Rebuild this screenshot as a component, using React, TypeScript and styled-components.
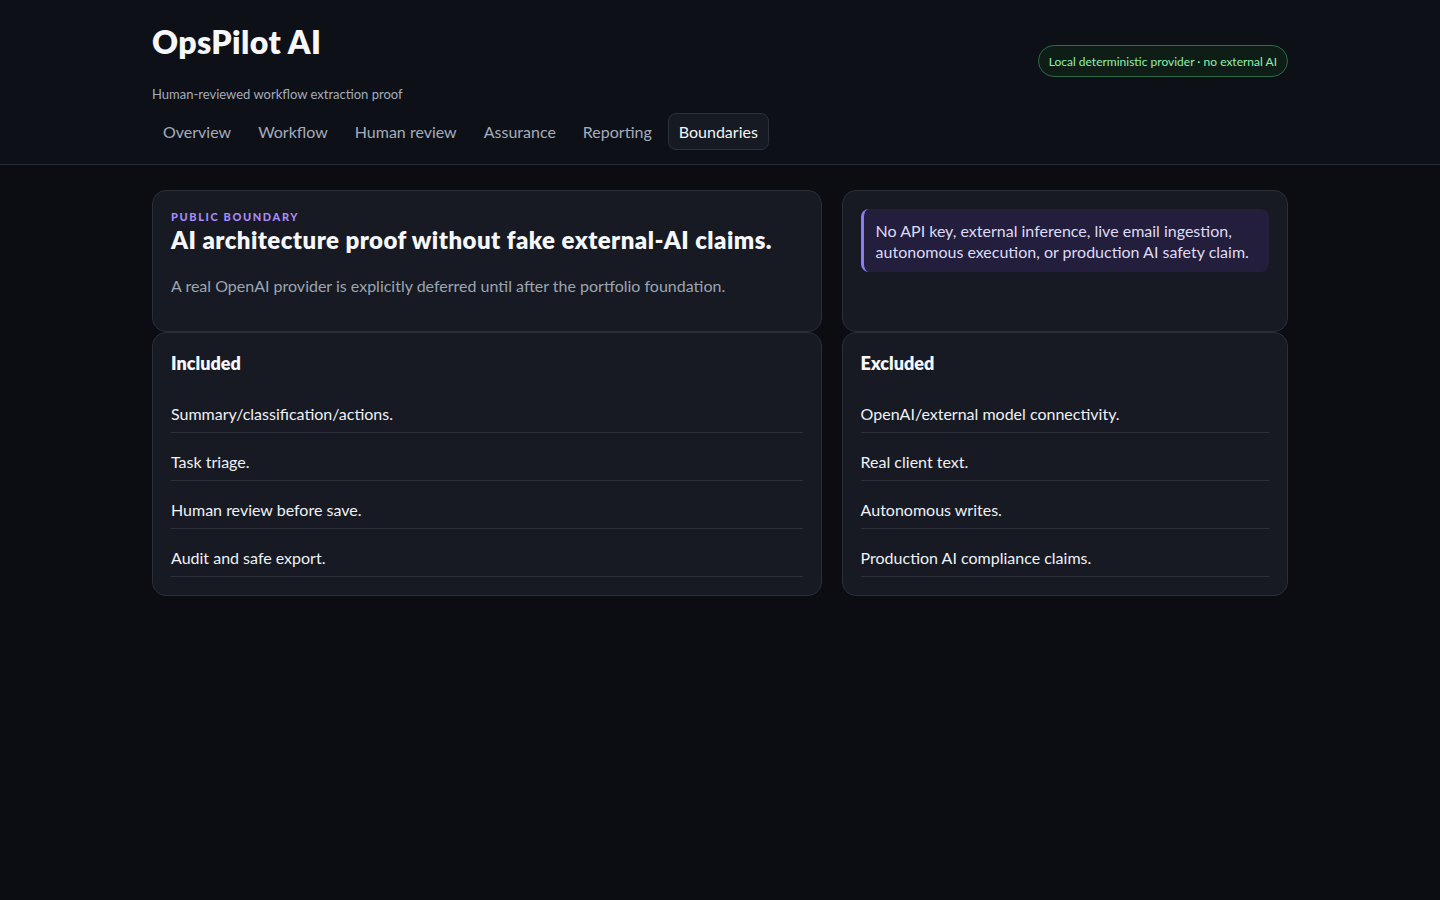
import React from "react";
import styled, { createGlobalStyle } from "styled-components";

const GlobalStyle = createGlobalStyle`
  html, body {
    margin: 0;
    padding: 0;
    background: #0b0d12;
    color: #e6e9ef;
    font-family: Lato, "Noto Sans", sans-serif;
  }
  * { box-sizing: border-box; }
`;

const Page = styled.div`
  min-height: 900px;
  background: #0b0d12;
`;

const Header = styled.header`
  background: #0d1017;
  border-bottom: 1px solid #262b35;
`;

const Container = styled.div`
  width: 1136px;
  margin: 0 auto;
`;

const HeaderInner = styled(Container)`
  padding: 22px 0 14px;
`;

const TopRow = styled.div`
  display: flex;
  justify-content: space-between;
  align-items: flex-start;
`;

const BrandBlock = styled.div`
  display: flex;
  flex-direction: column;
`;

const Title = styled.h1`
  margin: 0;
  font-size: 32px;
  line-height: 40px;
  font-weight: 800;
  letter-spacing: 0.4px;
  color: #f5f7fb;
`;

const Subtitle = styled.p`
  margin: 23px 0 0;
  font-size: 13px;
  line-height: 18px;
  color: #a4adbb;
`;

const Badge = styled.span`
  margin-top: 23px;
  display: inline-flex;
  align-items: center;
  height: 32px;
  padding: 0 10px;
  border-radius: 999px;
  border: 1px solid #2d6a46;
  background: #0f1d17;
  color: #8ff0ad;
  font-size: 12px;
`;

const Nav = styled.nav`
  display: flex;
  gap: 5px;
  margin-top: 10px;
`;

const Tab = styled.button<{ $active?: boolean }>`
  font-family: inherit;
  font-size: 16px;
  height: 37px;
  padding: 0 10px;
  border-radius: 8px;
  cursor: pointer;
  border: 1px solid ${(p) => (p.$active ? "#2c313c" : "transparent")};
  background: ${(p) => (p.$active ? "#161a22" : "transparent")};
  color: ${(p) => (p.$active ? "#f3f5f9" : "#a4adbb")};
`;

const Main = styled(Container)`
  padding-top: 25px;
  display: grid;
  grid-template-columns: 3fr 2fr;
  column-gap: 20px;
  row-gap: 0;
`;

const Card = styled.section`
  background: #171a22;
  border: 1px solid #2a2f3a;
  border-radius: 14px;
  padding: 18px;
`;

const Eyebrow = styled.div`
  font-size: 11px;
  line-height: 16px;
  font-weight: 900;
  letter-spacing: 1.6px;
  text-transform: uppercase;
  color: #a78bfa;
`;

const HeroTitle = styled.h2`
  margin: 0;
  font-size: 24px;
  line-height: 30px;
  font-weight: 800;
  letter-spacing: 0.45px;
  color: #f5f7fb;
`;

const Lead = styled.p`
  margin: 19px 0 15px;
  font-size: 16px;
  line-height: 24px;
  color: #9ca5b3;
`;

const Callout = styled.div`
  background: #221e3b;
  border-left: 3px solid #8b7cf6;
  border-radius: 8px;
  padding: 11px 14px 10px 12px;
  font-size: 16px;
  line-height: 21px;
  color: #dedaf7;
`;

const ListTitle = styled.h3`
  margin: 0 0 10px;
  font-size: 18px;
  line-height: 24px;
  font-weight: 800;
  color: #f5f7fb;
`;

const List = styled.ul`
  list-style: none;
  margin: 0;
  padding: 0;
`;

const Item = styled.li`
  font-size: 16px;
  line-height: 22px;
  padding: 18px 0 7px;
  border-bottom: 1px solid #2b303b;
  color: #eef1f6;
`;

const tabs = ["Overview", "Workflow", "Human review", "Assurance", "Reporting", "Boundaries"];
const included = [
  "Summary/classification/actions.",
  "Task triage.",
  "Human review before save.",
  "Audit and safe export.",
];
const excluded = [
  "OpenAI/external model connectivity.",
  "Real client text.",
  "Autonomous writes.",
  "Production AI compliance claims.",
];

export default function App() {
  return (
    <Page>
      <GlobalStyle />
      <Header>
        <HeaderInner>
          <TopRow>
            <BrandBlock>
              <Title>OpsPilot AI</Title>
              <Subtitle>Human-reviewed workflow extraction proof</Subtitle>
            </BrandBlock>
            <Badge>Local deterministic provider · no external AI</Badge>
          </TopRow>
          <Nav>
            {tabs.map((t) => (
              <Tab key={t} $active={t === "Boundaries"}>
                {t}
              </Tab>
            ))}
          </Nav>
        </HeaderInner>
      </Header>
      <Main>
        <Card>
          <Eyebrow>Public boundary</Eyebrow>
          <HeroTitle>AI architecture proof without fake external-AI claims.</HeroTitle>
          <Lead>A real OpenAI provider is explicitly deferred until after the portfolio foundation.</Lead>
        </Card>
        <Card>
          <Callout>
            No API key, external inference, live email ingestion, autonomous execution, or production AI safety claim.
          </Callout>
        </Card>
        <Card>
          <ListTitle>Included</ListTitle>
          <List>
            {included.map((i) => (
              <Item key={i}>{i}</Item>
            ))}
          </List>
        </Card>
        <Card>
          <ListTitle>Excluded</ListTitle>
          <List>
            {excluded.map((i) => (
              <Item key={i}>{i}</Item>
            ))}
          </List>
        </Card>
      </Main>
    </Page>
  );
}
